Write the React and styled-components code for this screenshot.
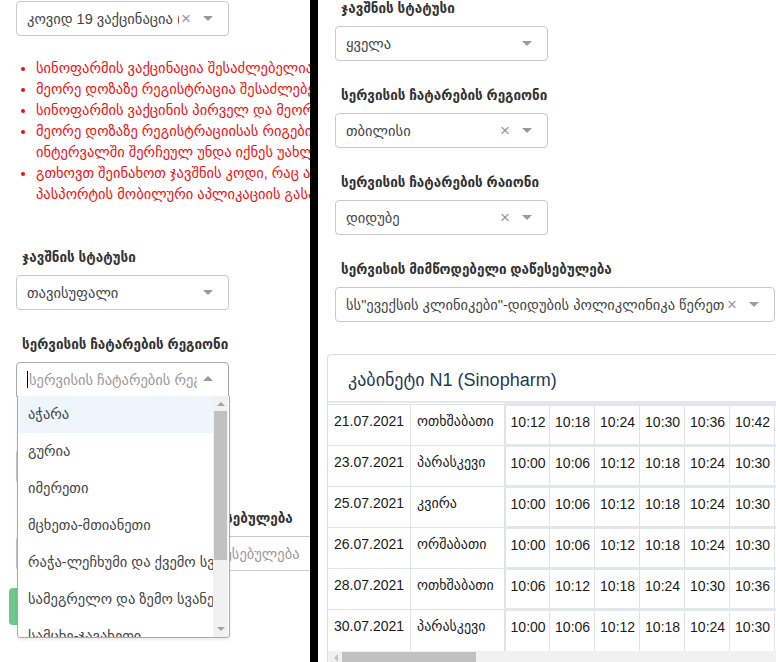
import styled, { createGlobalStyle } from 'styled-components';

const GlobalStyle = createGlobalStyle`
  html, body {
    margin: 0;
    padding: 0;
    background: #fff;
  }
  body {
    font-family: "Liberation Sans", "DejaVu Sans", sans-serif;
    color: #333;
  }
`;

const Page = styled.div`
  display: flex;
  width: 776px;
  height: 662px;
  overflow: hidden;
  background: #fff;
`;

const LeftPanel = styled.div`
  flex: none;
  width: 310px;
  height: 100%;
  overflow: hidden;
  padding: 1px 0 0 16px;
  box-sizing: border-box;
`;

const Divider = styled.div`
  flex: none;
  width: 8px;
  background: #000;
`;

const RightPanel = styled.div`
  flex: 1;
  height: 100%;
  overflow: hidden;
  padding-left: 17px;
  box-sizing: border-box;
`;

const Column = styled.div`
  display: flex;
  flex-direction: column;
  align-items: flex-start;
  width: 600px;
`;

const Field = styled.div`
  position: relative;
  display: flex;
  flex-direction: column;
  align-items: flex-start;
  margin-top: ${(p) => p.$mt || 0}px;
  margin-bottom: ${(p) => (p.$flush ? 0 : 26)}px;
`;

const Label = styled.div`
  font-size: 13.5px;
  font-weight: bold;
  line-height: 18px;
  color: #333;
  margin: 0 0 8px 6px;
  white-space: nowrap;
`;

const SelectBox = styled.div`
  position: relative;
  display: flex;
  align-items: center;
  width: ${(p) => p.$width}px;
  height: 35px;
  box-sizing: border-box;
  padding: 0 10px 0 10px;
  border: 1px solid ${(p) => (p.$open ? '#aaa' : '#c8c8c8')};
  border-radius: ${(p) => (p.$open ? '4px 4px 0 0' : '4px')};
  background: #fff;
  font-size: 14.5px;
  color: #444;
`;

const SelectText = styled.span`
  flex: 1;
  overflow: hidden;
  white-space: nowrap;
  color: ${(p) => (p.$placeholder ? '#999' : '#444')};
`;

const Clear = styled.span`
  flex: none;
  font-size: 17px;
  line-height: 1;
  color: #999;
  margin: 0 6px 0 2px;
`;

const Caret = styled.span`
  flex: none;
  width: 0;
  height: 0;
  margin: 0 5px 0 6px;
  border-left: 5px solid transparent;
  border-right: 5px solid transparent;
  ${(p) =>
    p.$up
      ? 'border-bottom: 5px solid #999; margin-top: -2px;'
      : 'border-top: 5px solid #999;'}
`;

const TextCursor = styled.span`
  flex: none;
  width: 1px;
  height: 17px;
  background: #000;
  margin-right: 1px;
`;

const Notes = styled.ul`
  margin: 22px 0 0 0;
  padding: 0 0 0 20px;
  list-style: disc;
  color: #f01010;
  font-size: 14.5px;
  line-height: 21px;
  white-space: nowrap;
`;

const Note = styled.li`
  padding-left: 0;
`;

const Dropdown = styled.div`
  position: absolute;
  top: 100%;
  left: 0;
  z-index: 5;
  width: 213px;
  height: 242px;
  box-sizing: border-box;
  border: 1px solid #aaa;
  border-top: none;
  border-radius: 0 0 4px 4px;
  background: #fff;
  overflow: hidden;
  box-shadow: 0 2px 3px rgba(0, 0, 0, 0.08);
`;

const OptionList = styled.div`
  width: 195px;
  overflow: hidden;
`;

const Option = styled.div`
  height: 37px;
  line-height: 37px;
  padding-left: 10px;
  white-space: nowrap;
  font-size: 14.5px;
  color: #444;
  background: ${(p) => (p.$active ? '#eef6fc' : '#fff')};
`;

const VScroll = styled.div`
  position: absolute;
  top: 0;
  right: 1px;
  bottom: 0;
  width: 15px;
  background: #f1f1f1;
  display: flex;
  flex-direction: column;
  align-items: center;
`;

const ScrollArrow = styled.span`
  flex: none;
  width: 0;
  height: 0;
  border-left: 4px solid transparent;
  border-right: 4px solid transparent;
  ${(p) =>
    p.$dir === 'up'
      ? 'border-bottom: 4px solid #a3a3a3; margin: 6px 0 5px;'
      : 'border-top: 4px solid #a3a3a3; margin: auto 0 6px;'}
`;

const VThumb = styled.div`
  width: 13px;
  height: 149px;
  background: #c1c1c1;
`;

const GreenButton = styled.button`
  margin: 17px 0 0 -7px;
  width: 110px;
  height: 37px;
  border: none;
  border-radius: 4px;
  background: #6fc58a;
  color: #fff;
  font-family: inherit;
  font-size: 14px;
`;

const Card = styled.div`
  margin: 6px 0 0 -8px;
  width: 640px;
  border: 1px solid #ddd;
  border-radius: 4px 0 0 0;
  background: #fff;
`;

const CardTitle = styled.div`
  height: 46px;
  line-height: 50px;
  padding-left: 20px;
  font-size: 18px;
  color: #1f3a53;
  border-bottom: 2px solid #e3e8ea;
`;

const Table = styled.table`
  border-collapse: collapse;
  font-size: 14px;
  color: #1a1a1a;
`;

const Cell = styled.td`
  height: 41px;
  box-sizing: border-box;
  padding: 8px 6px 0 6px;
  vertical-align: top;
  white-space: nowrap;
  border-top: 1px solid #dfe3e6;
  border-right: ${(p) => (p.$last ? 2 : 1)}px solid #dfe3e6;
  width: ${(p) => p.$w}px;
  min-width: ${(p) => p.$w}px;
`;

const TimeCell = styled.td`
  height: 41px;
  box-sizing: border-box;
  width: 45px;
  min-width: 45px;
  padding: 8px 0 0 5px;
  vertical-align: top;
  white-space: nowrap;
  border-top: 3px solid #e2e7ea;
  border-right: 1px solid #dfe3e6;
`;

const HScroll = styled.div`
  display: flex;
  align-items: center;
  height: 14px;
  background: #f1f1f1;
`;

const HArrow = styled.span`
  flex: none;
  width: 0;
  height: 0;
  margin: 0 4px 0 6px;
  border-top: 4px solid transparent;
  border-bottom: 4px solid transparent;
  border-right: 4px solid #c4c4c4;
`;

const HThumb = styled.div`
  width: 134px;
  height: 11px;
  background: #c1c1c1;
`;

const notes = [
  ['სინოფარმის ვაქცინაცია შესაძლებელია მხოლოდ 18 წლიდან'],
  ['მეორე დოზაზე რეგისტრაცია შესაძლებელია პირველი დოზის შემდეგ'],
  ['სინოფარმის ვაქცინის პირველ და მეორე დოზას შორის ინტერვალია 4 კვირა'],
  [
    'მეორე დოზაზე რეგისტრაციისას რიგები გამოჩნდება შესაბამის',
    'ინტერვალში შერჩეულ უნდა იქნეს უახლოესი თავისუფალი დრო',
  ],
  [
    'გთხოვთ შეინახოთ ჯავშნის კოდი, რაც ასევე ხელმისაწვდომია',
    'პასპორტის მობილური აპლიკაციის გასაღების მეშვეობით',
  ],
];

const regions = [
  'აჭარა',
  'გურია',
  'იმერეთი',
  'მცხეთა-მთიანეთი',
  'რაჭა-ლეჩხუმი და ქვემო სვანეთი',
  'სამეგრელო და ზემო სვანეთი',
  'სამცხე-ჯავახეთი',
];

const schedule = [
  ['21.07.2021', 'ოთხშაბათი', 12],
  ['23.07.2021', 'პარასკევი', 0],
  ['25.07.2021', 'კვირა', 0],
  ['26.07.2021', 'ორშაბათი', 0],
  ['28.07.2021', 'ოთხშაბათი', 6],
  ['30.07.2021', 'პარასკევი', 0],
];

const fmt = (m) => `${10 + Math.floor(m / 60)}:${String(m % 60).padStart(2, '0')}`;

function Select({ width, value, placeholder, clearable, open, children }) {
  return (
    <SelectBox $width={width} $open={open}>
      {open && <TextCursor />}
      <SelectText $placeholder={!value}>{value || placeholder}</SelectText>
      {clearable && <Clear>×</Clear>}
      <Caret $up={open} />
      {children}
    </SelectBox>
  );
}

export default function App() {
  return (
    <Page>
      <GlobalStyle />
      <LeftPanel>
        <Column>
          <Select width={213} value="კოვიდ 19 ვაქცინაცია (Sinopharm)" clearable />
          <Notes>
            {notes.map((lines, i) => (
              <Note key={i}>
                {lines.map((l, j) => (
                  <div key={j}>{l}</div>
                ))}
              </Note>
            ))}
          </Notes>

          <Field $mt={44}>
            <Label>ჯავშნის სტატუსი</Label>
            <Select width={213} value="თავისუფალი" />
          </Field>

          <Field>
            <Label>სერვისის ჩატარების რეგიონი</Label>
            <Select width={213} placeholder="სერვისის ჩატარების რეგიონი" open>
              <Dropdown>
                <OptionList>
                  {regions.map((r, i) => (
                    <Option key={r} $active={i === 0}>
                      {r}
                    </Option>
                  ))}
                </OptionList>
                <VScroll>
                  <ScrollArrow $dir="up" />
                  <VThumb />
                  <ScrollArrow $dir="down" />
                </VScroll>
              </Dropdown>
            </Select>
          </Field>

          <Field>
            <Label>სერვისის ჩატარების რაიონი</Label>
            <Select width={213} placeholder="სერვისის ჩატარების რაიონი" />
          </Field>

          <Field $flush>
            <Label>სერვისის მიმწოდებელი დაწესებულება</Label>
            <Select width={440} placeholder="სერვისის მიმწოდებელი დაწესებულება" />
          </Field>

          <GreenButton>ძებნა</GreenButton>
        </Column>
      </LeftPanel>

      <Divider />

      <RightPanel>
        <Column>
          <Field>
            <Label>ჯავშნის სტატუსი</Label>
            <Select width={213} value="ყველა" />
          </Field>
          <Field>
            <Label>სერვისის ჩატარების რეგიონი</Label>
            <Select width={213} value="თბილისი" clearable />
          </Field>
          <Field>
            <Label>სერვისის ჩატარების რაიონი</Label>
            <Select width={213} value="დიდუბე" clearable />
          </Field>
          <Field>
            <Label>სერვისის მიმწოდებელი დაწესებულება</Label>
            <Select
              width={440}
              value={'სს"ევექსის კლინიკები"-დიდუბის პოლიკლინიკა წერეთლის'}
              clearable
            />
          </Field>

          <Card>
            <CardTitle>კაბინეტი N1 (Sinopharm)</CardTitle>
            <Table>
              <tbody>
                {schedule.map(([date, day, start]) => (
                  <tr key={date}>
                    <Cell $w={80}>{date}</Cell>
                    <Cell $w={94} $last>
                      {day}
                    </Cell>
                    {Array.from({ length: 9 }, (_, k) => (
                      <TimeCell key={k}>{fmt(start + k * 6)}</TimeCell>
                    ))}
                  </tr>
                ))}
              </tbody>
            </Table>
            <HScroll>
              <HArrow />
              <HThumb />
            </HScroll>
          </Card>
        </Column>
      </RightPanel>
    </Page>
  );
}
